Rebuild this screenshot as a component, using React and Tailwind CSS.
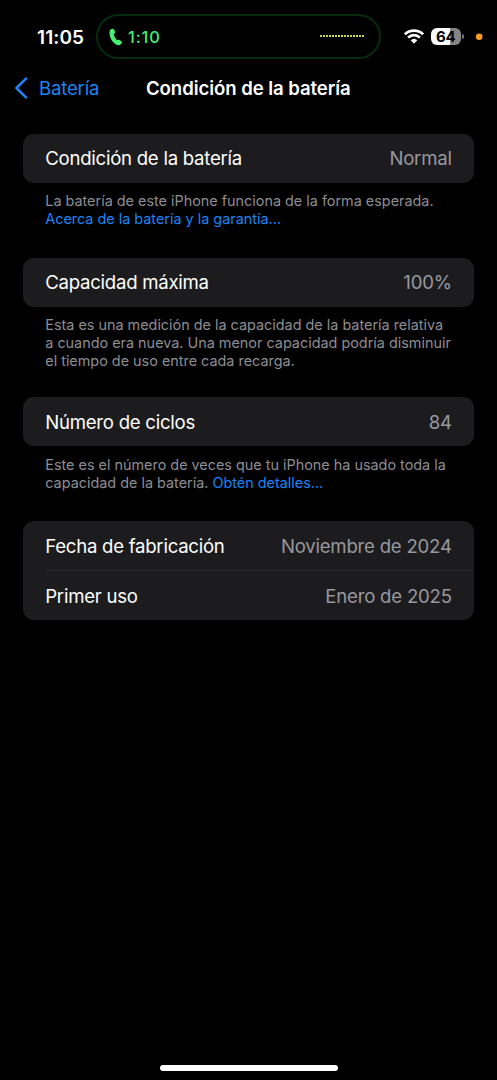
const LABEL = "text-[18.6px] leading-6";

function Row({ label, value, divided = false }) {
  return (
    <div className={`flex items-center justify-between pr-[22.5px] ${divided ? "h-[50px] border-t border-[#2b2b2d]" : "h-[49.25px] pt-[0.5px]"}`}>
      <span className={`whitespace-nowrap text-white tracking-[-0.26px] ${LABEL}`}>{label}</span>
      <span className={`whitespace-nowrap text-[#98989f] tracking-[-0.22px] ${LABEL}`}>{value}</span>
    </div>
  );
}

function Card({ children }) {
  return <div className="rounded-[11px] bg-[#1c1c1e] pl-[22.5px]">{children}</div>;
}

function Note({ children }) {
  return (
    <div className="flex flex-col items-start pl-[22.5px] pt-[9.25px] text-[14.4px] leading-[18px] text-[#8d8d93]">
      {children}
    </div>
  );
}

function Line({ children, className = "" }) {
  return <span className={`whitespace-nowrap ${className}`}>{children}</span>;
}

function StatusBar() {
  return (
    <div className="flex h-[59px] shrink-0 items-start pl-[37px] pt-[14px]">
      <span className="mt-[12px] w-[59px] shrink-0 whitespace-nowrap text-[19px] font-semibold leading-6 tracking-[0.1px] text-white">11:05</span>
      <div className="flex h-[45px] w-[285px] shrink-0 items-center justify-between rounded-full border-2 border-[#052c0d] pl-[11px] pr-[14px]">
        <div className="flex items-center">
          <svg width="14" height="18" viewBox="0 0 14 18" className="text-[#45ef70]">
            <path
              fill="currentColor"
              d="M1.5 1.5C2.3.6 3.7.4 4.4.9 5.4 1.6 6 3 6 4.200 6 5.200 4.900 5.500 4.800 6.300 4.700 7.400 6.500 10.700 7.600 11.700 8.300 12.300 9.100 11.600 10 11.700 11.200 11.900 13 13.500 13 14.500 13 15.800 11 17.300 9.300 17.200 4.700 16.800.700 10.600.500 5.300.400 3.700.700 2.500 1.500 1.500Z"
            />
          </svg>
          <span className="ml-[5px] whitespace-nowrap text-[16.4px] font-medium leading-6 tracking-[0.9px] text-[#45ef70]">1:10</span>
        </div>
        <svg width="45" height="4" viewBox="0 0 45 4" shapeRendering="crispEdges" className="-mt-px">
          <path d="M0 2H45" stroke="#c3d636" strokeWidth="2" strokeDasharray="2 1" />
        </svg>
      </div>
      <svg width="20" height="15" viewBox="0 0 20 15" className="ml-[22.5px] mt-[15px] shrink-0">
        <g fill="none" stroke="#fff" strokeWidth="2.7">
          <path d="M.9 5.3a13 13 0 0 1 18.2 0" />
          <path d="M4.1 8.6a8.4 8.4 0 0 1 11.8 0" />
        </g>
        <path fill="#fff" d="M6.7 11.3a4.8 4.8 0 0 1 6.6 0L10 14.8Z" />
      </svg>
      <div className="ml-[7px] mt-[14px] flex h-[17px] w-[30.5px] shrink-0 items-center justify-center rounded-[6px] bg-[linear-gradient(to_right,#fff_64%,#858585_64%)]">
        <span className="text-[15px] font-bold leading-[17px] tracking-[-0.2px] text-black">64</span>
      </div>
      <div className="ml-[1px] mt-[20px] h-[5px] w-[2px] shrink-0 rounded-r-full bg-[#777]" />
      <svg width="8" height="8" viewBox="0 0 8 8" className="ml-[11px] mt-[19px] shrink-0">
        <circle cx="4.2" cy="3.8" r="3.3" fill="#f99c1b" />
      </svg>
    </div>
  );
}

export default function App() {
  return (
    <div className="flex h-[1080px] w-[497px] flex-col overflow-hidden bg-black font-['Inter',sans-serif]">
      <StatusBar />
      <div className="flex h-[58px] shrink-0 items-center pl-[14px]">
        <svg width="14" height="22" viewBox="0 0 14 22" fill="none">
          <path d="M12 1.7 2.4 11 12 20.3" stroke="#1c84f3" strokeWidth="2.5" strokeLinecap="round" strokeLinejoin="round" />
        </svg>
        <span className="ml-[11px] w-[107px] whitespace-nowrap text-[18.6px] leading-6 tracking-[-0.2px] text-[#1c84f3]">Batería</span>
        <span className="whitespace-nowrap text-[18.6px] font-semibold leading-6 tracking-[-0.08px] text-white">Condición de la batería</span>
      </div>

      <main className="flex flex-col pl-[22.75px] pr-[22.75px] pt-[16.5px]">
        <section className="h-[124px]">
          <Card><Row label="Condición de la batería" value="Normal" /></Card>
          <Note>
            <Line>La batería de este iPhone funciona de la forma esperada.</Line>
            <Line className="text-[#1c84f3]">Acerca de la batería y la garantía...</Line>
          </Note>
        </section>

        <section className="h-[139.5px]">
          <Card><Row label="Capacidad máxima" value="100%" /></Card>
          <Note>
            <Line>Esta es una medición de la capacidad de la batería relativa</Line>
            <Line>a cuando era nueva. Una menor capacidad podría disminuir</Line>
            <Line>el tiempo de uso entre cada recarga.</Line>
          </Note>
        </section>

        <section className="h-[123.75px]">
          <Card><Row label="Número de ciclos" value="84" /></Card>
          <Note>
            <Line>Este es el número de veces que tu iPhone ha usado toda la</Line>
            <Line>capacidad de la batería. <span className="text-[#1c84f3]">Obtén detalles...</span></Line>
          </Note>
        </section>

        <Card>
          <Row label="Fecha de fabricación" value="Noviembre de 2024" />
          <Row label="Primer uso" value="Enero de 2025" divided />
        </Card>
      </main>

      <div className="mb-[9px] mt-auto h-[6px] w-[178px] self-center rounded-full bg-white" />
    </div>
  );
}
